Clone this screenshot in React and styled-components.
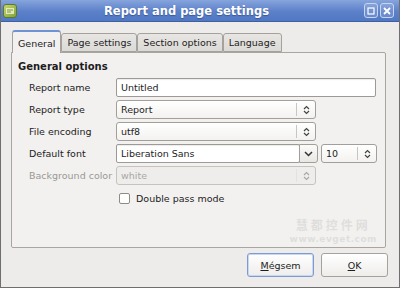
import React from "react";
import styled, { createGlobalStyle } from "styled-components";

const GlobalStyle = createGlobalStyle`
  html, body {
    margin: 0;
    padding: 0;
    background: #edecea;
  }
  * {
    box-sizing: border-box;
  }
`;

const Window = styled.div`
  position: relative;
  width: 400px;
  height: 288px;
  display: flex;
  flex-direction: column;
  background: #edecea;
  border: 1px solid #6f6f6f;
  border-top: none;
  font-family: "DejaVu Sans", "Liberation Sans", sans-serif;
  font-size: 9.5px;
  color: #1d1d1d;
  overflow: hidden;
`;

const TitleBar = styled.div`
  height: 22px;
  display: flex;
  align-items: center;
  padding: 0 6px 0 3px;
  background: linear-gradient(#86a4dc, #5c80c9 55%, #5078c4);
  border-bottom: 1px solid #3f5f9f;
  margin: 0 -1px;
`;

const AppIcon = styled.div`
  width: 14px;
  height: 14px;
  border-radius: 3px;
  background: linear-gradient(135deg, #c9d86a, #7fa23a);
  border: 1px solid #5b7a2a;
  display: flex;
  align-items: center;
  justify-content: center;
`;

const Title = styled.div`
  flex: 1;
  text-align: center;
  color: #ffffff;
  font-weight: bold;
  font-size: 11.5px;
  text-shadow: 0 1px 1px rgba(30, 50, 100, 0.5);
  padding-right: 8px;
`;

const TitleButtons = styled.div`
  display: flex;
  gap: 2px;
`;

const TitleButton = styled.div`
  width: 14px;
  height: 15px;
  border: 1px solid #c7d5f0;
  border-radius: 3px;
  background: rgba(255, 255, 255, 0.12);
  display: flex;
  align-items: center;
  justify-content: center;
`;

const Content = styled.div`
  flex: 1;
  display: flex;
  flex-direction: column;
  padding: 8px 13px 10px 10px;
`;

const TabRow = styled.div`
  display: flex;
  align-items: flex-end;
  height: 22px;
  padding-left: 1px;
  position: relative;
  z-index: 1;
`;

const Tab = styled.div`
  height: ${(p) => (p.$active ? "23px" : "19px")};
  margin-bottom: ${(p) => (p.$active ? "-1px" : "0")};
  padding: ${(p) => (p.$active ? "2px 5px 0 5px" : "0 5px")};
  display: flex;
  align-items: center;
  border: 1px solid #a5a29d;
  border-bottom: ${(p) => (p.$active ? "none" : "1px solid #a5a29d")};
  border-left-width: ${(p) => (p.$first ? "1px" : "0")};
  border-radius: 3px 3px 0 0;
  background: ${(p) =>
    p.$active ? "#f2f1f0" : "linear-gradient(#e8e6e3, #dcdad6)"};
  border-top: ${(p) => (p.$active ? "2px solid #6e93d4" : "1px solid #a5a29d")};
  ${(p) => (p.$first ? "" : "border-left: 1px solid #a5a29d;")}
  color: #222;
`;

const Pane = styled.div`
  flex: 1;
  background: #f2f1f0;
  border: 1px solid #a9a6a1;
  border-radius: 0 2px 2px 2px;
  padding: 8px 10px 0 6px;
  position: relative;
`;

const GroupTitle = styled.div`
  font-weight: bold;
  font-size: 10px;
  margin-bottom: 6px;
`;

const Form = styled.div`
  display: grid;
  grid-template-columns: 87px 1fr;
  row-gap: 3px;
  align-items: center;
  padding-left: 11px;
`;

const Label = styled.div`
  color: ${(p) => (p.$disabled ? "#9a9894" : "#222")};
  white-space: nowrap;
`;

const Field = styled.div`
  display: flex;
  gap: 3px;
  align-items: center;
`;

const TextInput = styled.div`
  width: ${(p) => p.$w}px;
  height: 19px;
  border: 1px solid #9d9a95;
  border-radius: 2px;
  background: #fff;
  display: flex;
  align-items: center;
  padding-left: 4px;
  box-shadow: inset 0 1px 1px rgba(0, 0, 0, 0.08);
`;

const Select = styled.div`
  width: ${(p) => p.$w}px;
  height: 19px;
  border: 1px solid ${(p) => (p.$disabled ? "#c6c3bf" : "#a29f9a")};
  border-radius: 3px;
  background: ${(p) =>
    p.$disabled ? "#eeedeb" : "linear-gradient(#ffffff, #f3f2f0)"};
  color: ${(p) => (p.$disabled ? "#a9a7a3" : "#1d1d1d")};
  display: flex;
  align-items: center;
`;

const SelectText = styled.div`
  flex: 1;
  padding-left: 4px;
`;

const Arrow = styled.div`
  width: 19px;
  height: 13px;
  border-left: 1px solid ${(p) => (p.$disabled ? "#d6d3cf" : "#c9c6c1")};
  display: flex;
  align-items: center;
  justify-content: center;
  opacity: ${(p) => (p.$disabled ? 0.4 : 1)};
`;

const ComboButton = styled.div`
  width: 19px;
  height: 19px;
  margin-left: -4px;
  border: 1px solid #a29f9a;
  border-radius: 0 3px 3px 0;
  background: linear-gradient(#fbfbfa, #e9e7e4);
  display: flex;
  align-items: center;
  justify-content: center;
`;

const CheckRow = styled.label`
  grid-column: 2;
  display: flex;
  align-items: center;
  gap: 6px;
  padding-left: 3px;
  margin-top: 5px;
`;

const CheckBox = styled.span`
  width: 11px;
  height: 11px;
  border: 1px solid #8f8c87;
  border-radius: 2px;
  background: #fff;
`;

const Watermark = styled.div`
  position: absolute;
  right: 8px;
  bottom: 3px;
  display: flex;
  flex-direction: column;
  align-items: center;
  gap: 2px;
  color: rgba(205, 203, 200, 0.5);
  font-weight: bold;
`;

const WatermarkBig = styled.div`
  font-family: "Noto Sans CJK SC", sans-serif;
  font-size: 12px;
  line-height: 14px;
  letter-spacing: 3px;
`;

const WatermarkSmall = styled.div`
  font-size: 9px;
  line-height: 10px;
  letter-spacing: 0.5px;
  font-family: "DejaVu Sans", sans-serif;
`;

const ButtonRow = styled.div`
  display: flex;
  justify-content: flex-end;
  gap: 7px;
  padding-top: 5px;
  margin-right: -2px;
`;

const Button = styled.div`
  width: 67px;
  height: 24px;
  border: 1px solid ${(p) => (p.$default ? "#7e9bd0" : "#a5a29d")};
  border-radius: 3px;
  background: linear-gradient(#ffffff, #eeedeb);
  box-shadow: ${(p) => (p.$default ? "inset 0 0 0 1px #c9d8f2" : "none")};
  display: flex;
  align-items: center;
  justify-content: center;
  color: #1d1d1d;

  u {
    text-decoration: underline;
  }
`;

const UpDown = ({ color = "#444" }) => (
  <svg width="7" height="10" viewBox="0 0 7 10">
    <path d="M1 4 L3.5 1.5 L6 4" fill="none" stroke={color} strokeWidth="1.2" />
    <path d="M1 6 L3.5 8.5 L6 6" fill="none" stroke={color} strokeWidth="1.2" />
  </svg>
);

const Down = () => (
  <svg width="9" height="6" viewBox="0 0 9 6">
    <path d="M1 1 L4.5 4.5 L8 1" fill="none" stroke="#333" strokeWidth="1.5" />
  </svg>
);

export default function App() {
  return (
    <>
      <GlobalStyle />
      <Window>
        <TitleBar>
          <AppIcon>
            <svg width="10" height="10" viewBox="0 0 10 10">
              <rect x="1" y="2" width="8" height="6" fill="#f2f5d6" opacity="0.8" />
              <path d="M2 4 H8 M2 6 H6" stroke="#7a9a3a" strokeWidth="1" />
            </svg>
          </AppIcon>
          <Title>Report and page settings</Title>
          <TitleButtons>
            <TitleButton>
              <svg width="8" height="8" viewBox="0 0 8 8">
                <rect x="1" y="1" width="6" height="6" fill="none" stroke="#fff" strokeWidth="1.2" />
              </svg>
            </TitleButton>
            <TitleButton>
              <svg width="8" height="8" viewBox="0 0 8 8">
                <path d="M1 1 L7 7 M7 1 L1 7" stroke="#fff" strokeWidth="1.8" />
              </svg>
            </TitleButton>
          </TitleButtons>
        </TitleBar>
        <Content>
          <TabRow>
            <Tab $active $first>General</Tab>
            <Tab>Page settings</Tab>
            <Tab>Section options</Tab>
            <Tab>Language</Tab>
          </TabRow>
          <Pane>
            <GroupTitle>General options</GroupTitle>
            <Form>
              <Label>Report name</Label>
              <Field>
                <TextInput $w={260}>Untitled</TextInput>
              </Field>

              <Label>Report type</Label>
              <Field>
                <Select $w={200}>
                  <SelectText>Report</SelectText>
                  <Arrow>
                    <UpDown />
                  </Arrow>
                </Select>
              </Field>

              <Label>File encoding</Label>
              <Field>
                <Select $w={200}>
                  <SelectText>utf8</SelectText>
                  <Arrow>
                    <UpDown />
                  </Arrow>
                </Select>
              </Field>

              <Label>Default font</Label>
              <Field>
                <TextInput $w={184}>Liberation Sans</TextInput>
                <ComboButton>
                  <Down />
                </ComboButton>
                <Select $w={56}>
                  <SelectText>10</SelectText>
                  <Arrow>
                    <UpDown />
                  </Arrow>
                </Select>
              </Field>

              <Label $disabled>Background color</Label>
              <Field>
                <Select $w={200} $disabled>
                  <SelectText>white</SelectText>
                  <Arrow $disabled>
                    <UpDown />
                  </Arrow>
                </Select>
              </Field>

              <CheckRow>
                <CheckBox />
                Double pass mode
              </CheckRow>
            </Form>
            <Watermark>
              <WatermarkBig>慧都控件网</WatermarkBig>
              <WatermarkSmall>www.evget.com</WatermarkSmall>
            </Watermark>
          </Pane>
          <ButtonRow>
            <Button $default>
              <span>
                <u>M</u>égsem
              </span>
            </Button>
            <Button>
              <span>
                <u>O</u>K
              </span>
            </Button>
          </ButtonRow>
        </Content>
      </Window>
    </>
  );
}
